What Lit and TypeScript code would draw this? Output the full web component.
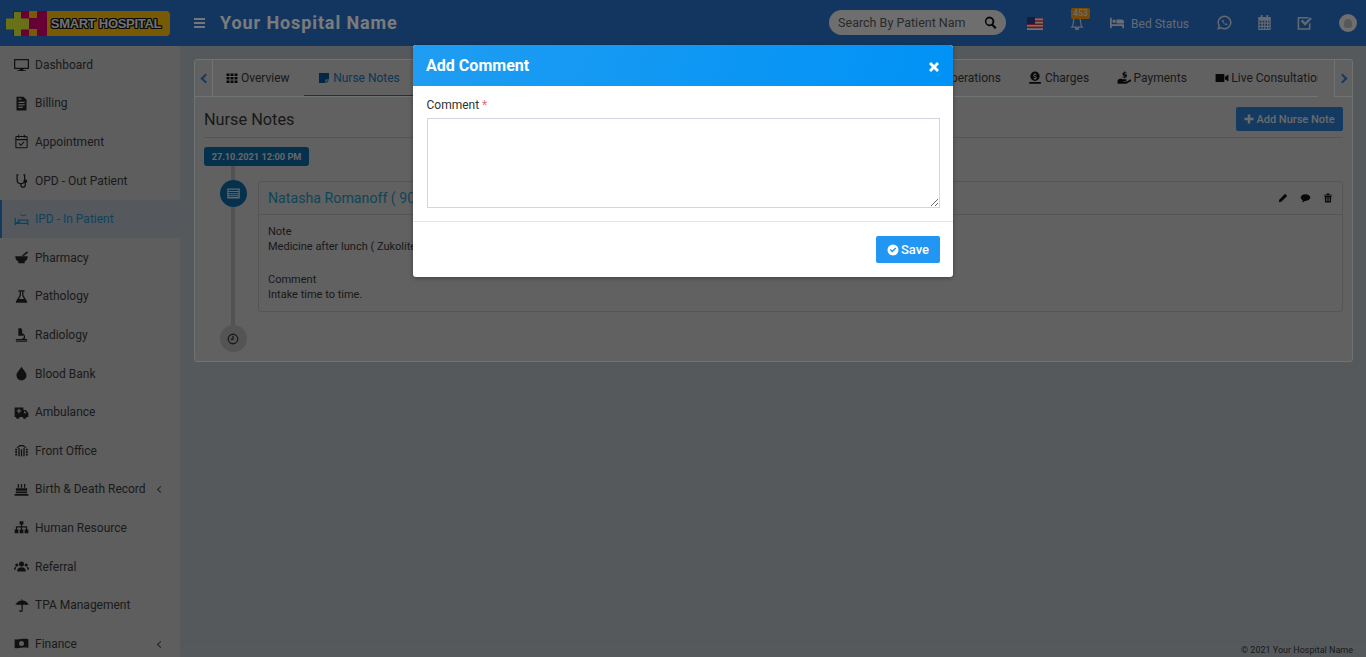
import { LitElement, html, css, svg } from "lit";
import { customElement } from "lit/decorators.js";

const s = (body: unknown, vb = "0 0 24 24") => html`<svg viewBox=${vb} fill="currentColor">${body}</svg>`;

const icons: Record<string, unknown> = {
  monitor: s(svg`<path d="M1 3h22a1 1 0 0 1 1 1v14a1 1 0 0 1-1 1h-8v2h4v1.500H5V21h4v-2H1a1 1 0 0 1-1-1V4a1 1 0 0 1 1-1zm1 2v12h20V5z"/>`),
  bill: s(svg`<path fill-rule="evenodd" d="M4 1h11l5 5v17H4zm3 8v2h10V9zm0 4v2h10v-2zm0 4v2h7v-2zM7 4v2h5V4z"/>`),
  appt: html`<svg viewBox="0 0 24 24" fill="none" stroke="currentColor" stroke-width="1.700"><rect x="3" y="4" width="18" height="18" rx="1"/><path d="M3 9h18M7.500 1v5M16.500 1v5M8 15l3 3 5-5.500"/></svg>`,
  steth: s(svg`<path d="M4 2h3v2H6v7a5 5 0 0 0 10 0V4h-1V2h3v9a7 7 0 0 1-6 6.900V19a2.500 2.500 0 0 0 5 0v-3a3 3 0 1 1 2 0v3a4.500 4.500 0 0 1-9 0v-1.100A7 7 0 0 1 4 11z"/>`),
  ipd: s(svg`<path fill-rule="evenodd" d="M1 9h2v7h3v-4h17v9h-2v-2H3v2H1zm8 5v3h12v-3zM11 3l2 2h4l2-2 1 1-2.500 2.500h-5L10 4z"/>`),
  pharm: s(svg`<path d="M2 10h20c0 4-2 7-5 8.500V21H7v-2.500C4 17 2 14 2 10zM12 9l9-7 1.500 2-6.500 5z"/>`),
  flask: s(svg`<path d="M7 2h10v2h-2v6l6 10v2H3v-2l6-10V4H7zm4 2v6.500L8 16h8l-3-5.500V4z"/>`),
  micro: s(svg`<path d="M7 2h5v2h1v6a6 6 0 0 1 4 9h4v2H3v-2h9a4 4 0 0 0 3-6.500V14H7zM3 22h18v1.500H3z"/>`),
  drop: s(svg`<path d="M12 1c3 5 8 9 8 14a8 8 0 0 1-16 0c0-5 5-9 8-14z"/>`),
  amb: s(svg`<path fill-rule="evenodd" d="M1 4h14v4h4l4 5v6h-3a3 3 0 0 1-6 0H9a3 3 0 0 1-6 0H1zm6 2v2.500H4.500v2H7V13h2v-2.500h2.500v-2H9V6zm9 4v3h4l-2.400-3z"/>`),
  front: s(svg`<path d="M2 9h3v3H2zm0 4h3v3H2zm0 4h3v3H2zM19 9h3v3h-3zm0 4h3v3h-3zm0 4h3v3h-3zM7 8h2v13H7zm8 0h2v13h-2zM11 10h2v11h-2zM4 7l5-4h6l5 4-1.500 1-4.500-3h-4L5.500 8z"/>`),
  cake: s(svg`<path d="M6 3h2v6H6zm5 0h2v6h-2zm5 0h2v6h-2zM3 10h18v4H3zm0 5h18v3H3zm-2 4h22v3H1z"/>`),
  org: s(svg`<path d="M9 2h6v5h-2v3h8v5h2v6h-6v-6h2v-3h-6v3h2v6H9v-6h2v-3H5v3h2v6H1v-6h2v-5h8V7H9z"/>`),
  users: s(svg`<circle cx="12" cy="8" r="4"/><circle cx="4.500" cy="9.500" r="2.500"/><circle cx="19.500" cy="9.500" r="2.500"/><path d="M5 20c0-5 3-7 7-7s7 2 7 7zM0 17c0-3 1.500-4.500 4-4.500-1 1-1.500 2.500-1.500 4.500zM24 17c0-3-1.500-4.500-4-4.500 1 1 1.500 2.500 1.500 4.500z"/>`),
  umbrella: s(svg`<path d="M11 2h2v1.500c5 .5 9 3.500 11 8-2-1.500-3.500-1.500-5 0-1.500-1.500-3.500-1.500-5 0v8a3 3 0 0 1-6 0h2a1 1 0 0 0 2 0v-8c-1.500-1.500-3.500-1.500-5 0-1.500-1.500-3-1.500-5 0 2-4.500 6-7.500 11-8z"/>`),
  money: s(svg`<path fill-rule="evenodd" d="M1 5c6 2 14-2 22 0v14c-8-2-16 2-22 0zm11 3a4 4 0 1 0 0 8 4 4 0 0 0 0-8z"/>`),
  grid: s(svg`<path d="M1 3h6v5H1zm8 0h6v5H9zm8 0h6v5h-6zM1 10h6v5H1zm8 0h6v5H9zm8 0h6v5h-6zM1 17h6v5H1zm8 0h6v5H9zm8 0h6v5h-6z"/>`),
  note: s(svg`<path d="M2 2h20v13h-7v7H2zM17 17h5l-5 5z"/>`),
  pill: s(svg`<path d="M8 3a5 5 0 0 1 7 0l6 6a5 5 0 0 1-7 7l-6-6a5 5 0 0 1 0-7z"/>`),
  rx: s(svg`<path d="M4 2h16v20H4zm3 5v2h10V7zm0 4v2h10v-2zm0 4v2h6v-2z"/>`),
  doc: s(svg`<circle cx="12" cy="7" r="5"/><path d="M3 22c0-6 4-8 9-8s9 2 9 8z"/>`),
  scis: s(svg`<circle cx="6" cy="6" r="4"/><circle cx="6" cy="18" r="4"/><path d="M9 8l13 10-2 1-10-7zM14 9l6-4 2 1-6 5z"/>`),
  charges: s(svg`<path fill-rule="evenodd" d="M12 1a8 8 0 1 1 0 16 8 8 0 0 1 0-16zm-1 3v1.500c-3 .5-3 4 0 4.500l2 .5c1 .3.500 1.500-1 1.500-1 0-1.500-.5-2-1l-1 1c.5.800 1.300 1.300 2 1.500V15h2v-1.500c3-.5 3-4 0-4.500l-2-.5c-1-.3-.5-1.500 1-1.500.8 0 1.300.3 1.800.8l1-1c-.5-.7-1.200-1.100-1.800-1.300V4zM2 19h20v3H2z"/>`),
  pay: s(svg`<path d="M1 16c3-3 6-3 9-2h5c2 0 2 3 0 3h-4v1h6l5-3c2-1 3 1 1.500 2.500L16 22H1zM12 1h2v1.500h2.500V4H13v1.500h2.500L17 7v2.500L15.500 11H14v1.500h-2V11H9.500V9.500H14V8h-3L9.500 6.500V4L11 2.500h1z"/>`),
  video: s(svg`<path d="M1 5h15v14H1zM17 10l6-4v12l-6-4z"/>`),
  search: s(svg`<path fill-rule="evenodd" d="M10 1a9 9 0 0 1 7.200 14.400l6 6-2.800 2.800-6-6A9 9 0 1 1 10 1zm0 3.500a5.500 5.500 0 1 0 0 11 5.500 5.500 0 0 0 0-11z"/>`),
  bell: html`<svg viewBox="0 0 24 24" fill="none" stroke="currentColor" stroke-width="2"><path d="M12 2c-4 0-6 3-6 7 0 6-1 8-3 10h18c-2-2-3-4-3-10 0-4-2-7-6-7z"/><path d="M9.500 21a2.500 2.500 0 0 0 5 0z" fill="currentColor"/></svg>`,
  bed: s(svg`<path d="M0 3h3v11h21v7h-3v-4H3v4H0zM4 9a3 3 0 1 1 6 0 3 3 0 0 1-6 0zm7-3h9a4 4 0 0 1 4 4v3H11z"/>`),
  whatsapp: html`<svg viewBox="0 0 24 24" fill="none" stroke="currentColor" stroke-width="2.400"><path d="M12 2a10 10 0 0 0-8.500 15.200L2.200 21.800l4.700-1.200A10 10 0 1 0 12 2z"/><path d="M8 8c0 4 4 8 8 8.500l1-2-2.500-1.300-1 1c-1.500-.7-2.500-1.800-3.200-3.200l1-1L10 7.500z" fill="currentColor" stroke="none"/></svg>`,
  cal: s(svg`<path fill-rule="evenodd" d="M6 0h3v3h6V0h3v3h4v21H2V3h4zM4 9v3h3V9zm5 0v3h2.500V9zm4.500 0v3H16V9zm4.500 0v3h2V9zM4 14v3h3v-3zm5 0v3h2.500v-3zm4.500 0v3H16v-3zm4.500 0v3h2v-3zM4 19v3h3v-3zm5 0v3h2.500v-3zm4.500 0v3H16v-3zm4.500 0v3h2v-3z"/>`),
  checkbox: s(svg`<path d="M1 3h18l-2 2.500H3.500v15.500h15.500v-6.500l2.500-2.500V23.500H1z"/><path d="M6 10l2.800-2.800 4.200 4.200 8-8L23.800 6 13 17z"/>`),
  list: s(svg`<path fill-rule="evenodd" d="M2 4h20v16H2zm2 2v2h16V6zm0 3.500v1.500h16V9.500zm0 3v1.500h16v-1.500zm0 3V17h16v-1.500z"/>`),
  clock: html`<svg viewBox="0 0 24 24" fill="none" stroke="currentColor" stroke-width="2.600"><circle cx="12" cy="12" r="9.500"/><path d="M12 6v6.500H7.500"/></svg>`,
  pencil: s(svg`<path d="M17 2l5 5L8 21l-6 1 1-6z"/>`),
  comment: s(svg`<path d="M12 3c6.500 0 11.500 3.500 11.500 8S18.500 19 12 19l-2 0c-2 2-4 3-6.500 3 1.500-1.500 2-3 2-4.500C2.500 16 .5 14 .5 11 .5 6.500 5.500 3 12 3z"/>`),
  trash: s(svg`<path fill-rule="evenodd" d="M9 1h6l1 3h6v2H2V4h6zM4 7h16l-1 16H5zm4 3v10h1.500V10zm3.200 0v10h1.600V10zm3.300 0v10H16V10z"/>`),
  plus: s(svg`<path d="M9 1h6v8h8v6h-8v8H9v-8H1V9h8z"/>`),
  checkc: s(svg`<path fill-rule="evenodd" d="M12 1a11 11 0 1 1 0 22 11 11 0 0 1 0-22zm-6.500 11l5 5 8-8-2-2-6 6-3-3z"/>`),
  times: s(svg`<path d="M6 2l6 6 6-6 4 4-6 6 6 6-4 4-6-6-6 6-4-4 6-6-6-6z"/>`),
};

const menu: [string, string, boolean?][] = [
  ["monitor", "Dashboard"], ["bill", "Billing"], ["appt", "Appointment"], ["steth", "OPD - Out Patient"],
  ["ipd", "IPD - In Patient"], ["pharm", "Pharmacy"], ["flask", "Pathology"], ["micro", "Radiology"],
  ["drop", "Blood Bank"], ["amb", "Ambulance"], ["front", "Front Office"], ["cake", "Birth & Death Record", true],
  ["org", "Human Resource"], ["users", "Referral"], ["umbrella", "TPA Management"], ["money", "Finance", true],
];

const tabs: [string, string][] = [
  ["grid", "Overview"], ["note", "Nurse Notes"], ["pill", "Medication"], ["rx", "Prescription"],
  ["doc", "Consultant Register"], ["flask", "Lab Investigation"], ["scis", "Operations"],
  ["charges", "Charges"], ["pay", "Payments"], ["video", "Live Consultation"],
];
const wide = ["Charges", "Payments", "Live Consultation"];

@customElement("app-root")
export class AppRoot extends LitElement {
  static styles = css`
    :host { display: block; height: 657px; overflow: hidden; position: relative; font-family: Roboto, "Liberation Sans", sans-serif; font-size: 12px; color: #555; background: #acb2b8; }
    svg { display: block; width: 100%; height: 100%; }
    * { box-sizing: border-box; }
    .header { position: relative; z-index: 2; height: 46px; background: #266cc0; display: flex; align-items: center; color: #c8d2e2; }
    .logo { display: flex; width: 181px; padding: 1px 0 0 6px; align-items: center; height: 46px; flex: none; }
    .logo-mark { width: 41px; height: 25px; flex: none; }
    .logo-pill { width: 123px; height: 25px; background: #f0b40a; border-radius: 0 4px 4px 0; display: flex; align-items: center; justify-content: center; font-family: "Liberation Sans", sans-serif; font-weight: 700; font-size: 13px; color: #e4e4e4; letter-spacing: -.3px; padding-left: 2px; padding-right: 7px; text-shadow: 1px 0 #111, -1px 0 #111, 0 1px #111, 0 -1px #111, 1px 1px #111, -1px -1px #111, 1px -1px #111, -1px 1px #111; }
    .burger { width: 11px; display: flex; flex-direction: column; gap: 2px; margin-left: 13px; flex: none; }
    .burger i { display: block; height: 2px; background: #e8ecf2; }
    .title { margin-left: 15px; margin-top: -2px; font-size: 18px; font-weight: 700; letter-spacing: .9px; color: #f4f6f8; }
    .right { margin-left: auto; display: flex; align-items: center; height: 46px; }
    .search { width: 177px; height: 25px; margin-top: -1px; border-radius: 13px; background: #dcdcdc; display: flex; align-items: center; padding: 0 9px; color: #555; font-size: 12.500px; }
    .search span { flex: 1; overflow: hidden; white-space: nowrap; }
    .search b { display: block; width: 13px; height: 13px; color: #111; margin-left: 19px; flex: none; }
    .flag { width: 16px; height: 13px; margin-left: 21px; }
    .bell { position: relative; width: 14px; height: 14px; margin-left: 27px; }
    .badge { position: absolute; left: 1px; top: -8px; width: 19px; height: 11px; background: #ee960e; border-radius: 2px; color: #ddd; font-size: 8.500px; font-weight: 500; line-height: 11px; text-align: center; }
    .bedicon { width: 18px; height: 14px; margin-left: 24px; color: #d4dce8; }
    .bedtext { margin-left: 5px; margin-top: 2px; }
    .hi { width: 15px; height: 15px; }
    .wa { margin-left: 28px; margin-top: -1px; }
    .ca { margin-left: 25px; margin-top: -2px; }
    .ch { margin-left: 25px; margin-top: -1px; }
    .avatar { width: 18px; height: 18px; border-radius: 50%; background: #dcdcdc; margin: 0 9px 0 27px; display: flex; align-items: center; justify-content: center; }
    .avatar i { width: 8px; height: 9px; background: #b0b0b0; border-radius: 50% 50% 30% 30%; }

    .wrap { display: flex; height: 611px; }
    .side { width: 180px; flex: none; background: #bcbcbc; margin-top: -.500px; overflow: hidden; height: 612px; }
    .item { height: 38.600px; display: flex; align-items: center; padding-left: 14px; color: #363636; position: relative; white-space: nowrap; }
    .item .ic { width: 15px; height: 15px; margin-right: 6px; color: #222; flex: none; }
    .item.on { background: #aab2bc; border-left: 2px solid #2b74c4; padding-left: 12px; color: #1c85b8; }
    .item.on .ic { color: #1c85b8; }
    .chev { position: absolute; left: 158px; width: 5px; height: 5px; border-left: 1px solid #444; border-bottom: 1px solid #444; transform: rotate(45deg); margin-top: 1px; }

    .main { flex: 1; min-width: 0; display: flex; flex-direction: column; }
    .content { flex: 1; padding: 13px 13px 0 14px; }
    .card { background: #c2c2c2; border: 1px solid #dce8e8; border-radius: 3px; }
    .tabs { display: flex; height: 37px; }
    .arrow { width: 18px; flex: none; border-right: 1px solid #dce8e8; border-bottom: 1px solid #dce8e8; display: flex; align-items: center; justify-content: center; color: #2b74c4; }
    .arrow.r { width: 18px; margin-left: 16px; border-left: 1px solid #dce8e8; border-right: 0; }
    .arrow i { width: 7px; height: 7px; border-left: 2px solid currentColor; border-bottom: 2px solid currentColor; transform: rotate(45deg); margin-left: 3px; }
    .arrow.r i { transform: rotate(225deg); margin: 0 3px 0 0; }
    .strip { flex: 1; min-width: 0; display: flex; overflow: hidden; border-bottom: 1px solid #dce8e8; }
    .tab { display: flex; align-items: center; flex: none; padding: 0 14.500px 2px; white-space: nowrap; color: #333; height: 37px; }
    .tab:first-child { margin-left: -1.500px; }
    .tab .ic { width: 12px; height: 12px; margin-right: 3px; color: #111; }
    .tab.on { color: #1a6ba8; border-bottom: 2px solid #1a6ba8; padding-bottom: 0; padding-right: 15px; margin-left: -.500px; }
    .tab.on .ic { color: #0a4f8c; }
    .tab:nth-child(6) { margin-right: 2px; }
    .tab.wd { padding: 0 14px 2px; }
    .tab.wd .ic { width: 14px; height: 14px; margin-right: 2.500px; }
    .tab.wd:nth-child(8) { margin-left: -1px; }
    .body { padding: 0 9px 9px; }
    .head { display: flex; justify-content: space-between; align-items: flex-start; height: 41px; padding-top: 10px; border-bottom: 1px solid #aaa; }
    .head h2 { margin: 1px 0 0; font-size: 16.300px; font-weight: 400; color: #333; line-height: 24px; }
    .add { width: 107px; height: 24px; background: #2b74c4; color: #d4d4d4; border-radius: 2px; display: flex; align-items: center; justify-content: center; font-size: 11px; font-weight: 500; }
    .add .ic { width: 10px; height: 10px; margin-right: 2px; }
    .date { margin-top: 9px; width: 105px; height: 19px; border-radius: 3px; background: #0a6299; color: #d0d0d0; font-size: 9.200px; font-weight: 700; display: flex; align-items: center; justify-content: center; }
    .tl { display: flex; }
    .rail { width: 54px; flex: none; display: flex; flex-direction: column; align-items: center; padding-left: 4px; }
    .rail .ln { width: 4px; background: #a4a4a4; }
    .rail .ln.a { height: 14px; }
    .rail .ln.b { flex: 1; }
    .dot { width: 27px; height: 27px; border-radius: 50%; flex: none; display: flex; align-items: center; justify-content: center; }
    .dot.blue { background: #0a6299; color: #ccc; }
    .dot.grey { background: #a8a8a8; color: #333; }
    .dot svg { width: 15px; height: 15px; }
    .dot.grey svg { width: 12px; height: 12px; }
    .box { flex: 1; margin-top: 15px; border: 1px solid #aaa; border-radius: 3px; height: 131px; margin-bottom: 40px; }
    .box-h { height: 33px; border-bottom: 1px solid #aaa; display: flex; align-items: center; padding: 0 9px; }
    .box-h a { font-size: 14.200px; color: #1d8bb0; white-space: nowrap; }
    .acts { margin-left: auto; display: flex; gap: 12px; align-items: center; color: #111; }
    .acts span { width: 10px; height: 10px; display: block; }
    .acts span:nth-child(2) { width: 11px; }
    .box-b { padding: 9px 9px 0; font-size: 11px; line-height: 15px; color: #333; }
    .box-b p { margin: 0 0 18px; }
    .foot { height: 16px; border-top: 1px solid #a6acb2; text-align: right; padding-right: 13px; font-size: 9px; line-height: 16px; color: #333; }

    .overlay { position: absolute; inset: 0; background: rgba(0,0,0,.5); z-index: 5; }
    .modal { position: absolute; left: 413px; top: 45px; width: 540px; height: 232px; background: #fff; border-radius: 3px; z-index: 6; overflow: hidden; box-shadow: 0 1px 4px rgba(0,0,0,.35); display: flex; flex-direction: column; }
    .m-h { height: 41px; background: linear-gradient(110deg, #1f9df2, #0092f6); color: #fff; display: flex; align-items: center; justify-content: space-between; padding: 0 13px; flex: none; }
    .m-h b { font-size: 16px; font-weight: 700; letter-spacing: .03px; }
    .m-h span { width: 12px; height: 12px; margin-top: 2px; }
    .m-b { padding: 12px 13px 0 14px; height: 136px; border-bottom: 1px solid #e5e5e5; }
    .m-b label { display: block; font-size: 12px; color: #333; line-height: 14px; margin-bottom: 6px; margin-left: -.500px; }
    .m-b label em { font-style: normal; color: #f06a82; }
    .m-b textarea { display: block; width: 513px; height: 90px; border: 1px solid #d2d6de; outline: 0; border-radius: 0; padding: 6px; margin: 0; background: #fff; font: inherit; }
    .m-f { flex: 1; display: flex; justify-content: flex-end; align-items: flex-start; padding: 14px 13px 0; }
    .save { width: 64px; height: 27px; background: #2196f3; border: 0; border-radius: 2px; color: #fff; display: flex; align-items: center; justify-content: center; font: 500 13px Roboto, sans-serif; padding: 0; }
    .save span { width: 12px; height: 12px; margin-right: 2px; }
  `;

  render() {
    return html`
      <div class="header">
        <div class="logo">
          <div class="logo-mark">
            <svg viewBox="0 0 41 25">
              <rect x="7" y="0" width="34" height="25" fill="#cc006a"/>
              <rect x="23" y="0" width="8" height="7" fill="#f0b40a"/>
              <rect x="23" y="18" width="8" height="7" fill="#f0b40a"/>
              <path d="M8 1h7v6.500h8v11h-8V25H8v-6.500H0v-11h8z" fill="#d0e030"/>
            </svg>
          </div>
          <div class="logo-pill">SMART HOSPITAL</div>
        </div>
        <div class="burger"><i></i><i></i><i></i></div>
        <div class="title">Your Hospital Name</div>
        <div class="right">
          <div class="search"><span>Search By Patient Name</span><b>${icons.search}</b></div>
          <div class="flag">
            <svg viewBox="0 0 16 13">
              <rect width="16" height="13" fill="#e8e8e8"/>
              <path d="M0 0h16v1.600H0zm0 3.200h16v1.600H0zm0 3.200h16v1.600H0zm0 3.200h16v1.600H0z" fill="#d8323c"/>
              <rect width="8" height="7" fill="#2c3a80"/>
            </svg>
          </div>
          <div class="bell">${icons.bell}<span class="badge">453</span></div>
          <div class="bedicon">${icons.bed}</div>
          <span class="bedtext">Bed Status</span>
          <div class="hi wa">${icons.whatsapp}</div>
          <div class="hi ca">${icons.cal}</div>
          <div class="hi ch">${icons.checkbox}</div>
          <div class="avatar"><i></i></div>
        </div>
      </div>
      <div class="wrap">
        <div class="side">
          ${menu.map(([ic, t, ch]) => html`<div class="item ${t.startsWith("IPD") ? "on" : ""}"><span class="ic">${icons[ic]}</span>${t}${ch ? html`<i class="chev"></i>` : ""}</div>`)}
        </div>
        <div class="main">
          <div class="content">
            <div class="card">
              <div class="tabs">
                <div class="arrow"><i></i></div>
                <div class="strip">
                  ${tabs.map(([ic, t]) => html`<div class="tab ${t === "Nurse Notes" ? "on" : ""} ${wide.includes(t) ? "wd" : ""}"><span class="ic">${icons[ic]}</span>${t}</div>`)}
                </div>
                <div class="arrow r"><i></i></div>
              </div>
              <div class="body">
                <div class="head">
                  <h2>Nurse Notes</h2>
                  <div class="add"><span class="ic">${icons.plus}</span>Add Nurse Note</div>
                </div>
                <div class="date">27.10.2021 12:00 PM</div>
                <div class="tl">
                  <div class="rail">
                    <div class="ln a"></div>
                    <div class="dot blue">${icons.list}</div>
                    <div class="ln b"></div>
                    <div class="dot grey">${icons.clock}</div>
                  </div>
                  <div class="box">
                    <div class="box-h">
                      <a>Natasha Romanoff ( 9012 )</a>
                      <div class="acts"><span>${icons.pencil}</span><span>${icons.comment}</span><span>${icons.trash}</span></div>
                    </div>
                    <div class="box-b">
                      <p>Note<br />Medicine after lunch ( Zukolite 100 mg )</p>
                      <p>Comment<br />Intake time to time.</p>
                    </div>
                  </div>
                </div>
              </div>
            </div>
          </div>
          <div class="foot">© 2021 Your Hospital Name</div>
        </div>
      </div>
      <div class="overlay"></div>
      <div class="modal">
        <div class="m-h"><b>Add Comment</b><span>${icons.times}</span></div>
        <div class="m-b">
          <label>Comment <em>*</em></label>
          <textarea></textarea>
        </div>
        <div class="m-f"><button class="save"><span>${icons.checkc}</span>Save</button></div>
      </div>
    `;
  }
}
